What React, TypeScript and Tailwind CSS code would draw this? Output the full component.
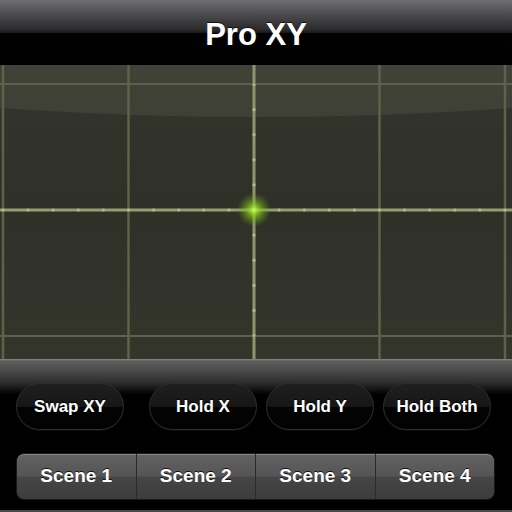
import React from "react";

const font = { fontFamily: '"Liberation Sans", Arial, Helvetica, sans-serif' };

function Grid() {
  const vx = [3, 128.5, 254, 379.5, 505];
  const hy = [19, 145, 271];
  const ticksX: number[] = [];
  for (let k = 0; k <= 20; k++) ticksX.push(3 + 25.1 * k);
  const ticksY: number[] = [];
  for (let k = -6; k <= 6; k++) ticksY.push(145 + 25.1 * k);
  return (
    <svg width="512" height="294" viewBox="0 0 512 294" className="block">
      <defs>
        <radialGradient id="glow" cx="254" cy="145" r="17" gradientUnits="userSpaceOnUse">
          <stop offset="0" stopColor="#c8ff50" stopOpacity="1" />
          <stop offset="0.3" stopColor="#8fd420" stopOpacity="0.75" />
          <stop offset="1" stopColor="#5a9a10" stopOpacity="0" />
        </radialGradient>
        <linearGradient id="bg" x1="0" y1="0" x2="0" y2="1">
          <stop offset="0" stopColor="#33352c" />
          <stop offset="0.5" stopColor="#2f3129" />
          <stop offset="1" stopColor="#34362c" />
        </linearGradient>
      </defs>
      <rect x="0" y="0" width="512" height="294" fill="url(#bg)" />
      <path d="M0 0 H512 V43 Q256 61 0 43 Z" fill="#c8ccb0" fillOpacity="0.09" />
      {vx.map((x) => (
        <line key={"v" + x} x1={x} y1={0} x2={x} y2={294} stroke={x === 254 ? "#90946a" : "#5f6249"} strokeWidth={x === 254 ? 3 : 2.5} />
      ))}
      {hy.map((y) => (
        <line key={"h" + y} x1={0} y1={y} x2={512} y2={y} stroke={y === 145 ? "#979b70" : "#5f6249"} strokeWidth={y === 145 ? 3 : 2} />
      ))}
      {ticksX.map((x) => (
        <circle key={"tx" + x} cx={x} cy={145} r={1.6} fill="#b4b88c" />
      ))}
      {ticksY.map((y) => (
        <circle key={"ty" + y} cx={254} cy={y} r={1.6} fill="#b4b88c" />
      ))}
      <circle cx="254" cy="145" r="17" fill="url(#glow)" />
    </svg>
  );
}

function Pill({ label, className }: { label: string; className?: string }) {
  return (
    <div
      className={
        "h-[47px] w-[108px] rounded-full border border-[#2e2e2e] bg-[linear-gradient(to_bottom,#1f1f1f_0%,#161616_50%,#040404_50%,#020202_100%)] flex items-center justify-center text-white font-bold text-[17px] shadow-[0_1px_0_rgba(255,255,255,0.06)] " +
        (className ?? "")
      }
      style={font}
    >
      <span className="[text-shadow:0_-1px_0_rgba(0,0,0,0.8)]">{label}</span>
    </div>
  );
}

export default function App() {
  const scenes = ["Scene 1", "Scene 2", "Scene 3", "Scene 4"];
  return (
    <div className="w-[512px] h-[512px] overflow-hidden bg-black flex flex-col" style={font}>
      <div className="h-[65px] shrink-0 bg-[linear-gradient(to_bottom,#6e6e72_0%,#4c4c50_22%,#2a2a2c_46%,#1a1a1a_50%,#020202_51%,#000000_100%)] flex items-center justify-center">
        <span className="text-white font-bold text-[31px] leading-none mt-[3px] [text-shadow:0_-1px_0_rgba(0,0,0,0.7)]">
          Pro XY
        </span>
      </div>
      <div className="h-[294px] shrink-0">
        <Grid />
      </div>
      <div className="flex-1 flex flex-col bg-[linear-gradient(to_bottom,#8a8a8a_0px,#5e5e5e_2px,#4a4a4a_12px,#2c2c2c_24px,#0a0a0a_33px,#000000_36px)]">
        <div className="flex pt-[24px] pl-[16px]">
          <Pill label="Swap XY" />
          <Pill label="Hold X" className="ml-[25px]" />
          <Pill label="Hold Y" className="ml-[9px]" />
          <Pill label="Hold Both" className="ml-[9px]" />
        </div>
        <div className="mt-[23px] ml-[16px] w-[479px] h-[47px] rounded-[8px] border border-[#1a1a1a] overflow-hidden flex bg-[linear-gradient(to_bottom,#626262_0%,#555555_48%,#464646_52%,#3c3c3c_100%)] shadow-[inset_0_1px_0_rgba(255,255,255,0.25)]">
          {scenes.map((s, i) => (
            <div
              key={s}
              className={
                "flex-1 flex items-center justify-center text-white font-bold text-[19px] [text-shadow:0_-1px_0_rgba(0,0,0,0.8)] " +
                (i > 0 ? "border-l border-[#2a2a2a]" : "")
              }
            >
              {s}
            </div>
          ))}
        </div>
        <div className="mt-[10px] h-[2px] bg-[#4a4a4a]" />
      </div>
    </div>
  );
}
